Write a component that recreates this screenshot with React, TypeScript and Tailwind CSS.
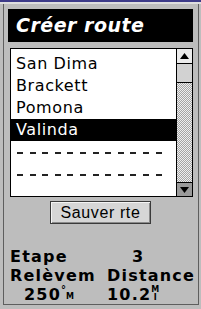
import React from "react";

const cities = ["San Dima", "Brackett", "Pomona", "Valinda"];

function Dashes() {
  return (
    <div className="flex gap-[6.6px] pl-[6px] pt-[11px]">
      {Array.from({ length: 12 }).map((_, i) => (
        <span key={i} className="block h-[2px] w-[6px] bg-[#222]" />
      ))}
    </div>
  );
}

export default function App() {
  return (
    <div className="relative h-[309px] w-[201px] overflow-hidden bg-[#bdbdbd] font-['DejaVu_Sans',sans-serif] text-black">
      <div className="h-[2px] bg-[#3d3a88]" />
      <div className="h-[2px] bg-[#dedede]" />
      <div className="ml-[3px] flex h-[301px] w-[196px] flex-col border-x border-b border-[#5e5e5e] pl-[4px] pt-[5px]">
        {/* title */}
        <div className="flex h-[33px] w-[185px] items-center bg-black pl-[8px]">
          <span className="text-[19px] font-bold italic leading-none tracking-[0.5px] text-white">
            Créer route
          </span>
        </div>

        {/* list */}
        <div className="ml-[2px] mt-[6px] flex h-[149px] w-[183px]">
          <div className="h-full w-[168px] border border-black bg-white pt-[4px]">
            {cities.map((c, i) => (
              <div
                key={c}
                className={
                  i === 3
                    ? "flex h-[22px] items-center bg-black pl-[5px] text-[16px] tracking-[0.6px] text-white"
                    : "flex h-[22px] items-center pl-[5px] text-[16px] tracking-[0.6px]"
                }
              >
                {c}
              </div>
            ))}
            <div className="h-[22px]">
              <Dashes />
            </div>
            <div className="h-[22px]">
              <Dashes />
            </div>
          </div>
          <div className="flex h-full w-[16px] flex-col border border-l-0 border-black bg-[repeating-conic-gradient(#a4a4a4_0%_25%,#eeeeee_0%_50%)] bg-[length:2px_2px]">
            <div className="flex h-[15px] items-center justify-center border-b border-black bg-[#ececec]">
              <svg width="9" height="6" viewBox="0 0 9 6">
                <path d="M4.5 0 L9 6 L0 6 Z" fill="#000" />
              </svg>
            </div>
            <div className="h-[19px] border-b border-black bg-[#d2d2d2]" />
            <div className="flex-1" />
            <div className="flex h-[14px] items-center justify-center border-t border-black bg-[#9a9a9a]">
              <svg width="9" height="6" viewBox="0 0 9 6">
                <path d="M0 0 L9 0 L4.5 6 Z" fill="#000" />
              </svg>
            </div>
          </div>
        </div>

        {/* button */}
        <div className="ml-[42px] mt-[4px] flex h-[23px] w-[101px] items-center justify-center border border-[#3a3a3a] bg-[#d6d6d6] shadow-[inset_1px_1px_0_#f4f4f4,inset_-1px_-1px_0_#8a8a8a]">
          <span className="font-['Liberation_Sans',sans-serif] text-[16px] leading-none tracking-[0.6px]">
            Sauver rte
          </span>
        </div>

        {/* info */}
        <div className="mt-[23px] grid grid-cols-[99px_1fr] text-[16px] font-bold leading-[19px] tracking-[1.2px]">
          <div className="pl-[2px]">Etape</div>
          <div className="pl-[25px]">3</div>
          <div className="pl-[2px]">Relèvem</div>
          <div>Distance</div>
          <div className="flex items-start pl-[16px]">
            <span>250</span>
            <span className="text-[10px] leading-[10px] tracking-normal">°</span>
            <span className="mt-[8px] text-[8px] leading-[8px] tracking-normal">M</span>
          </div>
          <div className="flex items-start">
            <span>10.2</span>
            <span className="mt-[1px] flex flex-col items-center text-[8px] leading-[8px] tracking-normal">
              <span>M</span>
              <span>I</span>
            </span>
          </div>
        </div>
      </div>
    </div>
  );
}
